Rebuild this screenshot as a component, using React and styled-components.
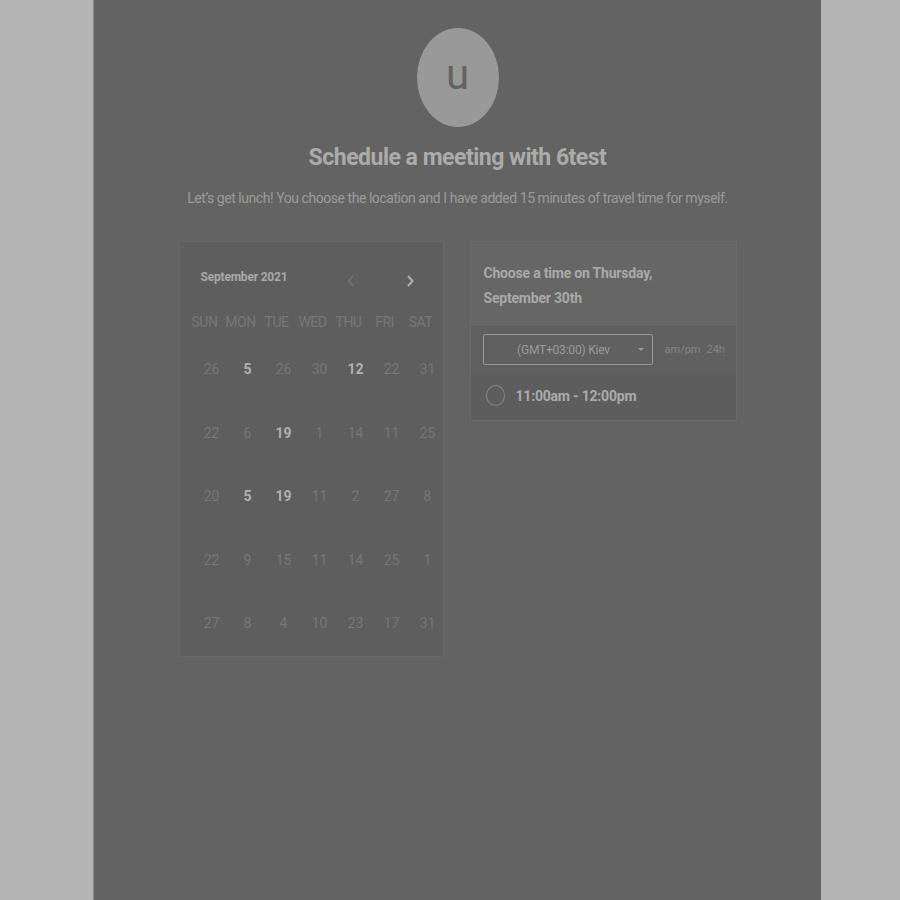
import React from 'react';
import styled, { createGlobalStyle } from 'styled-components';

const GlobalStyle = createGlobalStyle`
  html, body {
    margin: 0;
    padding: 0;
    background: #b4b4b4;
    font-family: Roboto, "Liberation Sans", sans-serif;
  }
`;

const weekdays = ['SUN', 'MON', 'TUE', 'WED', 'THU', 'FRI', 'SAT'];

const weeks = [
  [['26'], ['5', true], ['26'], ['30'], ['12', true], ['22'], ['31']],
  [['22'], ['6'], ['19', true], ['1'], ['14'], ['11'], ['25']],
  [['20'], ['5', true], ['19', true], ['11'], ['2'], ['27'], ['8']],
  [['22'], ['9'], ['15'], ['11'], ['14'], ['25'], ['1']],
  [['27'], ['8'], ['4'], ['10'], ['23'], ['17'], ['31']],
];

const App = () => (
  <>
    <GlobalStyle />
    <Page>
      <Column>
        <Avatar>u</Avatar>
        <Title>Schedule a meeting with 6test</Title>
        <Subtitle>
          Let’s get lunch! You choose the location and I have added 15 minutes of travel time for myself.
        </Subtitle>
        <Panels>
          <Calendar>
            <MonthBar>
              <MonthLabel>September 2021</MonthLabel>
              <Arrows>
                <Arrow $dim>
                  <svg width="10" height="14" viewBox="0 0 10 14">
                    <path d="M7 2 L2.5 7 L7 12" fill="none" stroke="currentColor" strokeWidth="1.6" />
                  </svg>
                </Arrow>
                <Arrow>
                  <svg width="10" height="14" viewBox="0 0 10 14">
                    <path d="M3 2 L7.5 7 L3 12" fill="none" stroke="currentColor" strokeWidth="2" />
                  </svg>
                </Arrow>
              </Arrows>
            </MonthBar>
            <WeekHeader>
              {weekdays.map((d) => (
                <Weekday key={d}>{d}</Weekday>
              ))}
            </WeekHeader>
            <Days>
              {weeks.map((week, i) =>
                week.map(([n, strong], j) => (
                  <Day key={`${i}-${j}`} $strong={strong}>
                    {n}
                  </Day>
                )),
              )}
            </Days>
          </Calendar>

          <Times>
            <TimesHeader>Choose a time on Thursday, September 30th</TimesHeader>
            <ZoneRow>
              <ZoneSelect>
                <span>(GMT+03:00) Kiev</span>
                <Caret />
              </ZoneSelect>
              <Formats>
                <span>am/pm</span>
                <span>24h</span>
              </Formats>
            </ZoneRow>
            <Slot>
              <Radio />
              <SlotLabel>11:00am - 12:00pm</SlotLabel>
            </Slot>
          </Times>
        </Panels>
      </Column>
    </Page>
  </>
);

const Page = styled.div`
  display: flex;
  justify-content: center;
  min-height: 900px;
  padding-left: 14px;
  box-sizing: border-box;
`;

const Column = styled.div`
  width: 728px;
  min-height: 900px;
  background: #636363;
  display: flex;
  flex-direction: column;
  align-items: center;
  padding-top: 28px;
  box-sizing: border-box;
  border-left: 1px solid #8a8a8a;
`;

const Avatar = styled.div`
  width: 82px;
  height: 99px;
  border-radius: 50%;
  background: #999999;
  color: #636363;
  font-size: 42px;
  display: flex;
  align-items: center;
  justify-content: center;
  padding-bottom: 6px;
  box-sizing: border-box;
`;

const Title = styled.h1`
  margin: 18px 0 0;
  font-size: 23px;
  font-weight: 700;
  color: #ababab;
  letter-spacing: -0.5px;
  line-height: 26px;
`;

const Subtitle = styled.p`
  margin: 18px 0 0;
  font-size: 14px;
  color: #9b9b9b;
  letter-spacing: -0.45px;
  line-height: 18px;
`;

const Panels = styled.div`
  display: flex;
  gap: 26px;
  align-items: flex-start;
  margin-top: 34px;
`;

const Calendar = styled.div`
  width: 265px;
  height: 416px;
  box-sizing: border-box;
  background: #5e5e5e;
  border: 1px solid #686868;
  padding: 22px 0 0 7px;
`;

const MonthBar = styled.div`
  display: flex;
  align-items: center;
  justify-content: space-between;
  padding: 0 28px 0 14px;
`;

const MonthLabel = styled.div`
  font-size: 12px;
  font-weight: 700;
  color: #a8a8a8;
  letter-spacing: -0.2px;
  margin-top: 2px;
`;

const Arrows = styled.div`
  display: flex;
  gap: 49px;
  margin-top: 10px;
`;

const Arrow = styled.span`
  display: flex;
  color: ${(p) => (p.$dim ? '#747474' : '#b0b0b0')};
`;

const WeekHeader = styled.div`
  display: grid;
  grid-template-columns: repeat(7, 36px);
  margin-top: 26px;
`;

const Weekday = styled.div`
  text-align: center;
  font-size: 14px;
  color: #787878;
  letter-spacing: -0.5px;
`;

const Days = styled.div`
  display: grid;
  grid-template-columns: repeat(7, 36px);
  grid-auto-rows: 63.5px;
  margin-top: 31px;
  padding-left: 7px;
`;

const Day = styled.div`
  text-align: center;
  font-size: 14px;
  color: ${(p) => (p.$strong ? '#b0b0b0' : '#777777')};
  font-weight: ${(p) => (p.$strong ? 700 : 400)};
`;

const Times = styled.div`
  width: 267px;
  box-sizing: border-box;
  border: 1px solid #6a6a6a;
  background: #606060;
`;

const TimesHeader = styled.div`
  background: #666666;
  padding: 19px 60px 15px 13px;
  font-size: 14px;
  font-weight: 700;
  line-height: 25px;
  color: #a9a9a9;
  letter-spacing: -0.2px;
`;

const ZoneRow = styled.div`
  display: flex;
  align-items: center;
  padding: 7px 10px 8px 12px;
  border-top: 1px solid #5c5c5c;
`;

const ZoneSelect = styled.div`
  flex-shrink: 0;
  width: 170px;
  height: 31px;
  box-sizing: border-box;
  border: 1px solid #9a9a9a;
  border-radius: 2px;
  display: flex;
  align-items: center;
  justify-content: center;
  position: relative;
  font-size: 12px;
  color: #9a9a9a;
  letter-spacing: -0.2px;
  padding-right: 8px;
`;

const Caret = styled.span`
  position: absolute;
  right: 8px;
  top: 13px;
  width: 0;
  height: 0;
  border-left: 3px solid transparent;
  border-right: 3px solid transparent;
  border-top: 3px solid #9a9a9a;
`;

const Formats = styled.div`
  display: flex;
  gap: 6px;
  margin-left: 12px;
  font-size: 11px;
  color: #858585;
  white-space: nowrap;
`;

const Slot = styled.div`
  display: flex;
  align-items: center;
  gap: 11px;
  padding: 12px 14px 14px 15px;
  background: #5d5d5d;
`;

const Radio = styled.span`
  width: 19px;
  height: 21px;
  box-sizing: border-box;
  border-radius: 50%;
  border: 1.5px solid #858585;
`;

const SlotLabel = styled.span`
  font-size: 14px;
  font-weight: 700;
  color: #ababab;
  letter-spacing: -0.2px;
`;

export default App;
